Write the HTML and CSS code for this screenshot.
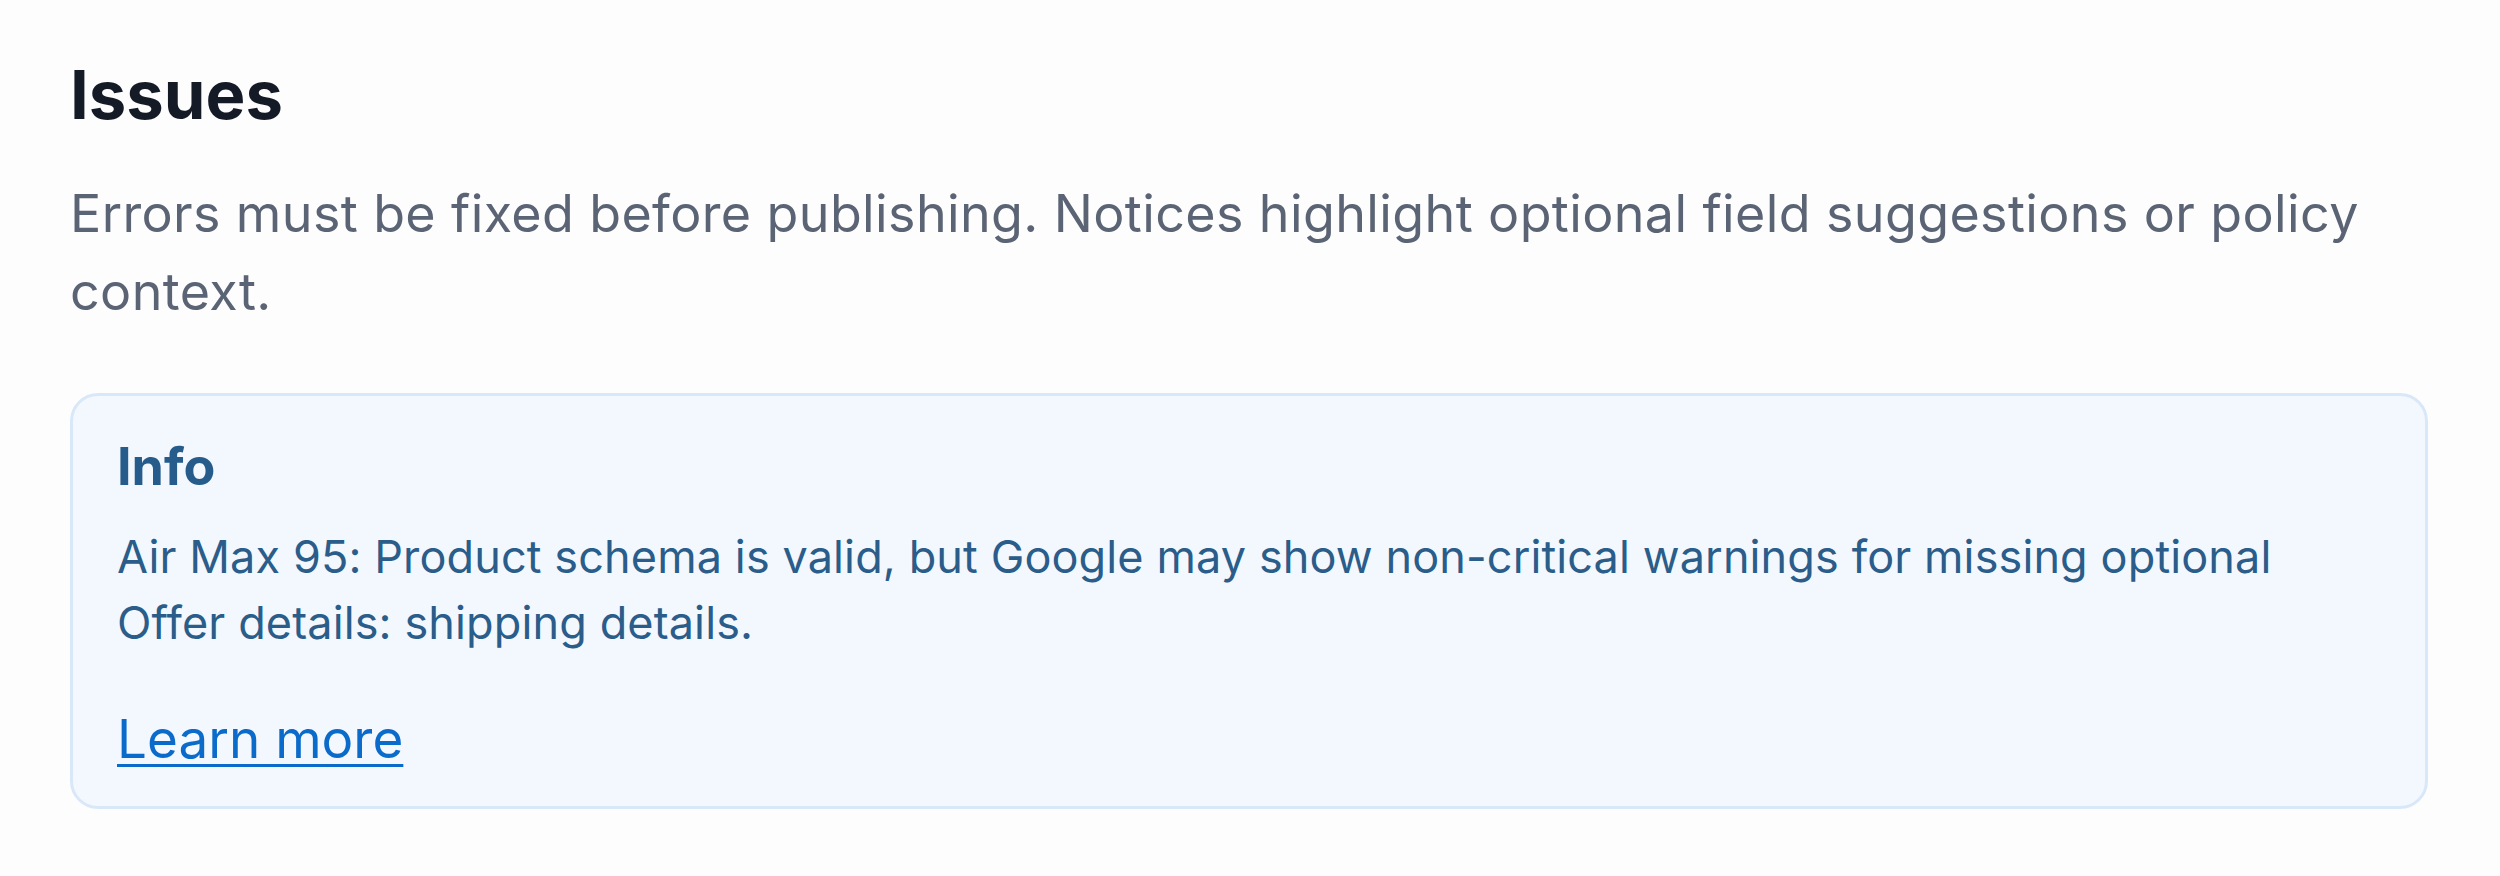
FILE: index.html
```html
<!DOCTYPE html>
<html lang="en">
<head>
    <meta charset="UTF-8">
    <meta name="viewport" content="width=device-width, initial-scale=1.0">
    <title>Issues</title>
    <link rel="stylesheet" href="styles.css">
</head>
<body>
    <div class="issues">
        <h1 class="issues-title">Issues</h1>
        <p class="issues-intro">Errors must be fixed before publishing. Notices highlight optional field suggestions or policy context.</p>
        <div class="notice notice-info">
            <div class="notice-title">Info</div>
            <div class="notice-text">Air Max 95: Product schema is valid, but Google may show non-critical warnings for missing optional Offer details: shipping details.</div>
            <a href="#" class="notice-link">Learn more</a>
        </div>
    </div>
</body>
</html>
```

FILE: styles.css
```css
body {
    font-family: Inter, "Noto Sans", sans-serif;
    margin: 0;
    padding: 0;
    background-color: #fdfdfe;
}
.issues {
    padding: 55px 72px 0 70px;
    display: flex;
    flex-direction: column;
}
.issues-title {
    font-size: 67px;
    font-weight: 700;
    line-height: 79px;
    color: #141a26;
    margin: 0;
}
.issues-intro {
    font-size: 52px;
    line-height: 78px;
    letter-spacing: 0.38px;
    color: #5b6474;
    margin: 41px 0 62px 0;
}
.notice {
    border: 3px solid #d9e8f8;
    border-radius: 28px;
    background-color: #f3f7fe;
    padding: 40px 44px 28px 44px;
    display: flex;
    flex-direction: column;
    align-items: flex-start;
}
.notice-title {
    font-size: 52px;
    font-weight: 700;
    line-height: 62px;
    color: #265c8b;
}
.notice-text {
    font-size: 45px;
    line-height: 66px;
    letter-spacing: 0.12px;
    color: #2a5d8a;
    margin-top: 26px;
}
.notice-link {
    font-size: 53px;
    line-height: 78px;
    color: #0b6bcb;
    margin-top: 44px;
    text-underline-offset: 6px;
    text-decoration-thickness: 3px;
}
```
